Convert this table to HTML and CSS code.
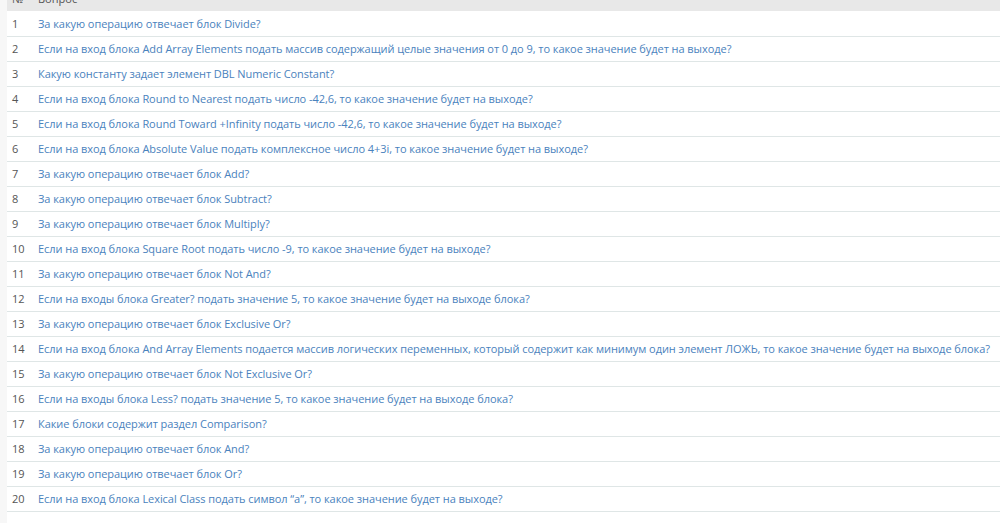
FILE: index.html
```html
<!DOCTYPE html>
<html lang="ru">

<head>
    <meta charset="UTF-8">
    <meta name="viewport" content="width=device-width, initial-scale=1.0">
    <title>Вопросы</title>
    <link rel="stylesheet" href="styles.css">
</head>

<body>
    <div class="page">
        <table class="questions">
            <colgroup>
                <col class="num_col">
                <col>
            </colgroup>
            <thead>
                <tr>
                    <th class="num">№</th>
                    <th>Вопрос</th>
                </tr>
            </thead>
            <tbody>
                <tr><td class="num">1</td><td><a href="#">За какую операцию отвечает блок Divide?</a></td></tr>
                <tr><td class="num">2</td><td><a href="#">Если на вход блока Add Array Elements подать массив содержащий целые значения от 0 до 9, то какое значение будет на выходе?</a></td></tr>
                <tr><td class="num">3</td><td><a href="#">Какую константу задает элемент DBL Numeric Constant?</a></td></tr>
                <tr><td class="num">4</td><td><a href="#">Если на вход блока Round to Nearest подать число -42,6, то какое значение будет на выходе?</a></td></tr>
                <tr><td class="num">5</td><td><a href="#">Если на вход блока Round Toward +Infinity подать число -42,6, то какое значение будет на выходе?</a></td></tr>
                <tr><td class="num">6</td><td><a href="#">Если на вход блока Absolute Value подать комплексное число 4+3i, то какое значение будет на выходе?</a></td></tr>
                <tr><td class="num">7</td><td><a href="#">За какую операцию отвечает блок Add?</a></td></tr>
                <tr><td class="num">8</td><td><a href="#">За какую операцию отвечает блок Subtract?</a></td></tr>
                <tr><td class="num">9</td><td><a href="#">За какую операцию отвечает блок Multiply?</a></td></tr>
                <tr><td class="num">10</td><td><a href="#">Если на вход блока Square Root подать число -9, то какое значение будет на выходе?</a></td></tr>
                <tr><td class="num">11</td><td><a href="#">За какую операцию отвечает блок Not And?</a></td></tr>
                <tr><td class="num">12</td><td><a href="#">Если на входы блока Greater? подать значение 5, то какое значение будет на выходе блока?</a></td></tr>
                <tr><td class="num">13</td><td><a href="#">За какую операцию отвечает блок Exclusive Or?</a></td></tr>
                <tr><td class="num">14</td><td><a href="#">Если на вход блока And Array Elements подается массив логических переменных, который содержит как минимум один элемент ЛОЖЬ, то какое значение будет на выходе блока?</a></td></tr>
                <tr><td class="num">15</td><td><a href="#">За какую операцию отвечает блок Not Exclusive Or?</a></td></tr>
                <tr><td class="num">16</td><td><a href="#">Если на входы блока Less? подать значение 5, то какое значение будет на выходе блока?</a></td></tr>
                <tr><td class="num">17</td><td><a href="#">Какие блоки содержит раздел Comparison?</a></td></tr>
                <tr><td class="num">18</td><td><a href="#">За какую операцию отвечает блок And?</a></td></tr>
                <tr><td class="num">19</td><td><a href="#">За какую операцию отвечает блок Or?</a></td></tr>
                <tr><td class="num">20</td><td><a href="#">Если на вход блока Lexical Class подать символ “a”, то какое значение будет на выходе?</a></td></tr>
            </tbody>
        </table>
    </div>
</body>

</html>
```

FILE: styles.css
```css
* {
    margin: 0;
    padding: 0;
    box-sizing: border-box;
}

html,
body {
    height: 100%;
}

body {
    background-color: #f7f7f7;
    font-family: "Open Sans", Arial, sans-serif;
    font-size: 11px;
    overflow: hidden;
    padding-left: 7px;
}

/* the list is scrolled a little, so the header is cut off */
.page {
    margin-top: -14px;
    min-height: calc(100% + 14px);
    background-color: #fff;
}

.questions {
    width: 100%;
    table-layout: fixed;
    border-collapse: collapse;
}

.num_col {
    width: 26px;
}

.questions th {
    height: 25px;
    background-color: #e8e8e8;
    color: #555;
    font-weight: normal;
    text-align: left;
    padding: 0 5px;
}

.questions td {
    height: 25px;
    border-bottom: 1px solid #dfe6e6;
    padding: 0 5px;
    vertical-align: middle;
    white-space: nowrap;
    overflow: visible;
}

.questions .num {
    color: #555;
}

.questions a {
    color: #4a82bd;
    text-decoration: none;
    letter-spacing: -0.005em;
}
```
